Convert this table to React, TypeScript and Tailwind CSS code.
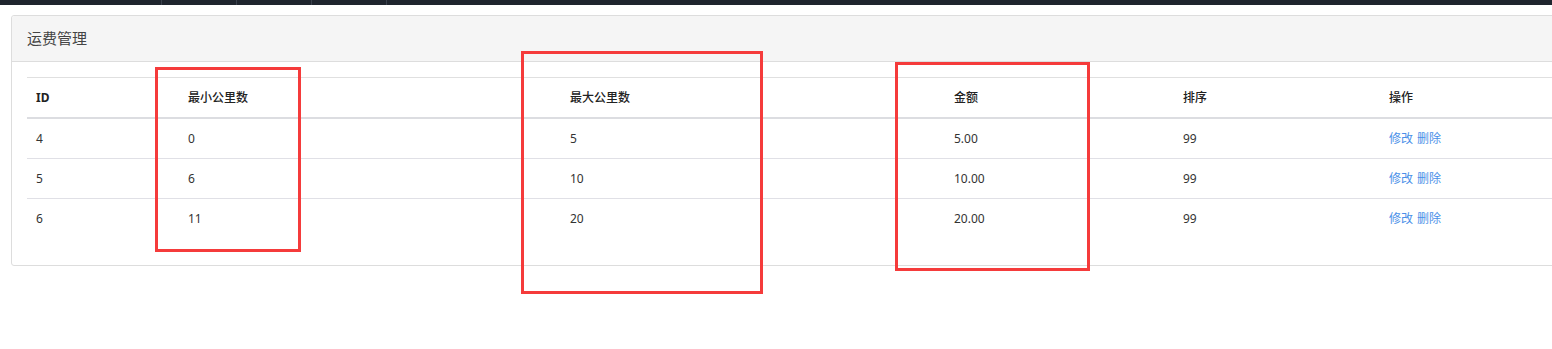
const rows = [
  { id: 4, min: 0, max: 5, amount: "5.00", sort: 99 },
  { id: 5, min: 6, max: 10, amount: "10.00", sort: 99 },
  { id: 6, min: 11, max: 20, amount: "20.00", sort: 99 },
];

const cols = ["w-[152px]", "w-[382px]", "w-[384px]", "w-[229px]", "w-[206px]", "w-[200px]"];

function Cell({ i, children, className = "" }: { i: number; children: React.ReactNode; className?: string }) {
  return <div className={`${cols[i]} shrink-0 pl-[9px] flex items-center ${className}`}>{children}</div>;
}

export default function App() {
  return (
    <div
      className="relative h-[349px] w-[1552px] overflow-hidden bg-white text-[#333]"
      style={{ fontFamily: '"Noto Sans", "Noto Sans CJK SC", sans-serif' }}
    >
      {/* top navigation strip */}
      <div className="flex h-[5px] bg-[#1f252e]">
        <div className="w-[162px] border-r border-[#3a414c]" />
        <div className="w-[75px] border-r border-[#3a414c]" />
        <div className="w-[75px] border-r border-[#3a414c]" />
        <div className="w-[75px] border-r border-[#3a414c]" />
      </div>

      <div className="ml-[11px] mt-[10px] w-[1580px] rounded-[3px] border border-[#dddddd]">
        <div className="flex h-[46px] items-center rounded-t-[3px] border-b border-[#dddddd] bg-[#f5f5f5] pl-[15px] text-[15px] text-[#444]">
          运费管理
        </div>
        <div className="px-[15px] pb-[27px] pt-[15px]">
          <div className="text-[12px]">
            <div className="flex h-[42px] border-t border-b-2 border-[#e0e0e0] border-b-[#dcdde1] font-medium text-[#222]">
              <Cell i={0} className="font-bold">ID</Cell>
              <Cell i={1}>最小公里数</Cell>
              <Cell i={2}>最大公里数</Cell>
              <Cell i={3}>金额</Cell>
              <Cell i={4}>排序</Cell>
              <Cell i={5}>操作</Cell>
            </div>
            {rows.map((r, idx) => (
              <div
                key={r.id}
                className={`flex ${idx === 0 ? "h-[39px]" : "h-[40px] border-t border-[#e0e0e6]"}`}
              >
                <Cell i={0}>{r.id}</Cell>
                <Cell i={1}>{r.min}</Cell>
                <Cell i={2}>{r.max}</Cell>
                <Cell i={3}>{r.amount}</Cell>
                <Cell i={4}>{r.sort}</Cell>
                <Cell i={5} className="gap-[4px] text-[#4a8fe8]">
                  <a href="#">修改</a>
                  <a href="#">删除</a>
                </Cell>
              </div>
            ))}
          </div>
        </div>
      </div>

      {/* highlight frames */}
      <div className="absolute left-[155px] top-[67px] h-[185px] w-[146px] border-[3px] border-[#f53b3b]" />
      <div className="absolute left-[521px] top-[51px] h-[243px] w-[242px] border-[3px] border-[#f53b3b]" />
      <div className="absolute left-[895px] top-[62px] h-[209px] w-[195px] border-[3px] border-[#f53b3b]" />
    </div>
  );
}
